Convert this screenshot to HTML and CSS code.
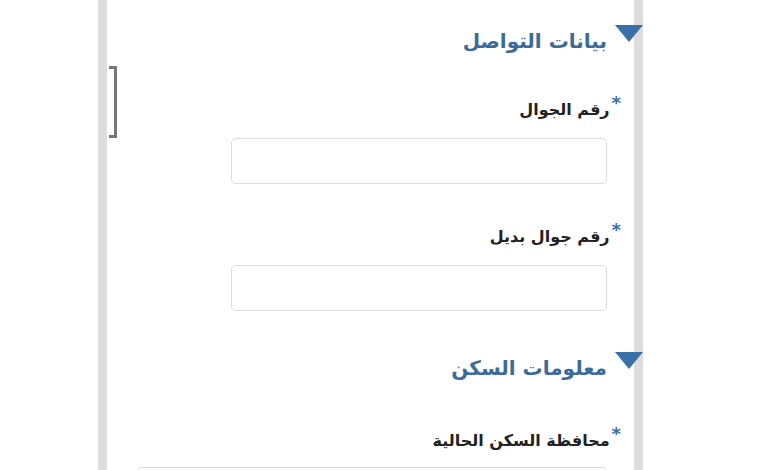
FILE: index.html
```html
<!DOCTYPE html>
<html lang="ar" dir="rtl">
<head>
    <meta charset="UTF-8">
    <meta name="viewport" content="width=device-width, initial-scale=1.0">
    <title>بيانات التواصل</title>
    <link rel="stylesheet" href="styles.css">
</head>
<body>

<main class="panel">
    <span class="bracket"></span>

    <h2 class="section-title">بيانات التواصل</h2>

    <div class="field">
        <label><span class="req">*</span>رقم الجوال</label>
        <input type="text">
    </div>

    <div class="field">
        <label><span class="req">*</span>رقم جوال بديل</label>
        <input type="text">
    </div>

    <h2 class="section-title">معلومات السكن</h2>

    <div class="field">
        <label><span class="req">*</span>محافظة السكن الحالية</label>
        <input type="text" class="wide">
    </div>
</main>

</body>
</html>
```

FILE: styles.css
```css
html, body {
    margin: 0;
    height: 100%;
    overflow: hidden;
    background: #ffffff;
}
body {
    font-family: "DejaVu Sans", sans-serif;
}

.panel {
    position: relative;
    box-sizing: border-box;
    width: 545px;
    height: 100%;
    margin-right: 137px;
    border-left: 9px solid #dddddd;
    border-right: 9px solid #dddddd;
    padding: 26px 27px 0 0;
}

.bracket {
    position: absolute;
    left: 2px;
    top: 66px;
    width: 5px;
    height: 66px;
    border: 3px solid #777777;
    border-left: none;
}

.section-title {
    position: relative;
    margin: 0 0 36px;
    font-size: 20px;
    font-weight: bold;
    color: #3d6b98;
    line-height: 30px;
}
.section-title::after {
    content: "";
    position: absolute;
    right: -36px;
    top: -1px;
    border-left: 14px solid transparent;
    border-right: 14px solid transparent;
    border-top: 17px solid #3a70a8;
}
.field + .section-title {
    margin-top: 42px;
    margin-bottom: 40px;
}

.field {
    margin-bottom: 35px;
}
.field label {
    display: block;
    font-size: 16px;
    font-weight: bold;
    color: #222222;
    line-height: 22px;
    margin-bottom: 17px;
}
.req {
    color: #3a70a8;
    margin-right: -14px;
    margin-left: 2px;
    font-size: 18px;
    vertical-align: 6px;
}
.field input {
    display: block;
    box-sizing: border-box;
    width: 376px;
    height: 46px;
    border: 1px solid #dcdcdc;
    border-radius: 5px;
    background: #ffffff;
}
.field input.wide {
    width: 470px;
    margin-top: -2px;
}
```
